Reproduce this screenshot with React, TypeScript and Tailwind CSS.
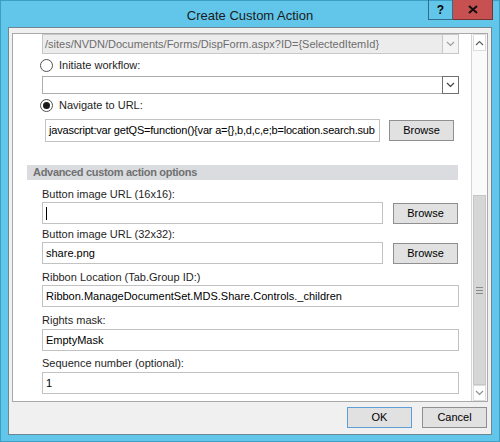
import React from "react";

function Chevron({ dir = "down", color = "#606060" }: { dir?: "up" | "down"; color?: string }) {
  return (
    <svg width="9" height="6" viewBox="0 0 9 6">
      <polyline
        points={dir === "down" ? "1,1 4.5,4.5 8,1" : "1,5 4.5,1.5 8,5"}
        fill="none"
        stroke={color}
        strokeWidth="1.2"
      />
    </svg>
  );
}

function Radio({ checked, label }: { checked?: boolean; label: string }) {
  return (
    <div className="flex items-center h-4 mt-[3px] ml-[-2px]">
      <span className="w-[13px] h-[13px] rounded-full border border-[#505050] bg-white flex items-center justify-center">
        {checked && <span className="w-[7px] h-[7px] rounded-full bg-[#1a1a1a]" />}
      </span>
      <span className="ml-[6px] text-[11px] text-[#1e1e1e]">{label}</span>
    </div>
  );
}

function BrowseButton() {
  return (
    <button className="w-[65px] h-[21px] bg-[#e1e1e1] border border-[#8f8f8f] text-[11px] text-black leading-none">
      Browse
    </button>
  );
}

function Field({
  label,
  value,
  browse,
  mt,
  inputMt = "mt-px",
}: {
  label: string;
  value: string;
  browse?: boolean;
  mt: string;
  inputMt?: string;
}) {
  return (
    <div className={mt}>
      <div className="h-[14px] leading-[14px] text-[11px] text-[#1e1e1e]">{label}</div>
      <div className={`flex items-center gap-[10px] ${inputMt}`}>
        <div
          className={`h-[22px] border border-[#c2c2c2] bg-white flex items-center px-[3px] text-[11px] text-black whitespace-nowrap overflow-hidden ${
            browse ? "w-[341px]" : "w-[417px]"
          }`}
        >
          {value === "|" ? <span className="w-px h-[13px] bg-black" /> : value}
        </div>
        {browse && <BrowseButton />}
      </div>
    </div>
  );
}

export default function App() {
  return (
    <div className="w-[500px] h-[442px] bg-[#62c6ea] border border-[#3d9ec3] flex flex-col font-['Liberation_Sans',Arial,sans-serif]">
      {/* title bar */}
      <div className="h-[26px] grid grid-cols-[1fr_auto_1fr] items-start">
        <div />
        <div className="text-[13px] text-[#1b1b1b] mt-[5px]">Create Custom Action</div>
        <div className="flex justify-end pr-[6px] -mt-px">
          <div className="w-[25px] h-[20px] border border-[#2d6f8a] border-t-0 flex items-center justify-center text-[12px] font-bold text-black">
            ?
          </div>
          <div className="w-[40px] h-[20px] bg-[#c75050] border border-[#7a3030] border-t-0 border-l-0 flex items-center justify-center">
            <svg width="10" height="9" viewBox="0 0 10 9">
              <path d="M1 1 L9 8 M9 1 L1 8" stroke="#111" strokeWidth="2" />
            </svg>
          </div>
        </div>
      </div>

      {/* client area */}
      <div className="mx-[7px] h-[408px] bg-[#f0f0f0] border border-[#6f8790] flex flex-col">
        {/* scrolling panel */}
        <div className="mt-[5px] ml-[3px] w-[476px] h-[369px] border border-[#a9a9a9] bg-white flex overflow-hidden">
          <div className="flex-1 pl-[29px] pr-[12px] flex flex-col">
            {/* disabled combobox (scrolled partly) */}
            <div className="h-[20px] border border-[#c8c8c8] bg-[#ececec] flex">
              <div className="flex-1 flex items-center px-[2px] text-[11px] text-[#6d6d6d] whitespace-nowrap overflow-hidden">
                /sites/NVDN/Documents/Forms/DispForm.aspx?ID={"{SelectedItemId}"}
              </div>
              <div className="w-[16px] border-l border-[#c8c8c8] bg-[#f4f4f4] flex items-center justify-center">
                <Chevron color="#a0a0a0" />
              </div>
            </div>

            <Radio label="Initiate workflow:" />

            <div className="mt-[3px] h-[18px] border border-[#acacac] bg-white flex justify-end">
              <div className="w-[17px] h-[18px] -mt-px -mr-px border border-[#707070] flex items-center justify-center">
                <Chevron color="#404040" />
              </div>
            </div>

            <Radio checked label="Navigate to URL:" />

            <div className="mt-[6px] ml-[3px] flex items-center gap-[9px]">
              <div className="w-[335px] h-[23px] border border-[#c2c2c2] bg-white flex items-center pl-[3px] text-[11px] tracking-[-0.2px] text-black whitespace-nowrap overflow-hidden">
                {"javascript:var getQS=function(){var a={},b,d,c,e;b=location.search.sub"}
              </div>
              <BrowseButton />
            </div>

            {/* section header */}
            <div className="mt-[23px] -ml-[15px] w-[431px] h-[15px] bg-[#dadcdf] flex items-center pl-[6px] text-[11px] font-bold tracking-[-0.3px] text-[#707070]">
              Advanced custom action options
            </div>

            <Field mt="mt-[7px]" label="Button image URL (16x16):" value="|" browse />
            <Field mt="mt-[3px]" label="Button image URL (32x32):" value="share.png" browse />
            <Field mt="mt-[6px]" label="Ribbon Location (Tab.Group ID:)" value="Ribbon.ManageDocumentSet.MDS.Share.Controls._children" />
            <Field mt="mt-[6px]" inputMt="mt-[2px]" label="Rights mask:" value="EmptyMask" />
            <Field mt="mt-[5px]" inputMt="mt-[2px]" label="Sequence number (optional):" value="1" />
          </div>

          {/* vertical scrollbar */}
          <div className="w-[17px] border-l border-[#d4d4d4] bg-[#fafafa] flex flex-col">
            <div className="h-[17px] mx-px border border-[#dcdcdc] bg-white flex items-center justify-center">
              <Chevron dir="up" color="#606060" />
            </div>
            <div className="h-[144px]" />
            <div className="flex-1 mx-px bg-[#d6d6d6] border border-[#c6c6c6] flex items-center justify-center">
              <div className="flex flex-col gap-[2px]">
                <span className="w-[7px] h-px bg-[#8a8a8a]" />
                <span className="w-[7px] h-px bg-[#8a8a8a]" />
                <span className="w-[7px] h-px bg-[#8a8a8a]" />
              </div>
            </div>
            <div className="h-[16px] mx-px border border-[#dcdcdc] bg-white flex items-center justify-center">
              <Chevron color="#909090" />
            </div>
          </div>
        </div>

        {/* dialog buttons */}
        <div className="mt-[5px] flex justify-end gap-[10px] pr-[4px]">
          <button className="w-[65px] h-[21px] bg-[#e1e1e1] border border-[#5f9fd6] text-[11px] text-black leading-none">
            OK
          </button>
          <button className="w-[65px] h-[21px] bg-[#e1e1e1] border border-[#8f8f8f] text-[11px] text-black leading-none">
            Cancel
          </button>
        </div>
      </div>
    </div>
  );
}
